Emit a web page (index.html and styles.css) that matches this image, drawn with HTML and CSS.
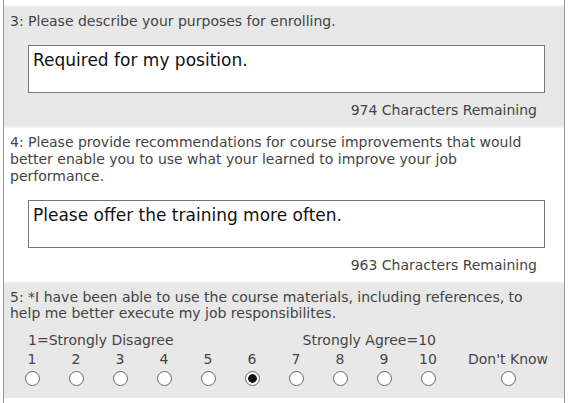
FILE: index.html
```html
<!DOCTYPE html>
<html>
<head>
<meta charset="utf-8">
<link rel="stylesheet" href="styles.css">
</head>
<body>
<div class="survey">
  <div class="top"></div>
  <div class="q gray">
    <div class="qtext">3: Please describe your purposes for enrolling.</div>
    <div class="answer">Required for my position.</div>
    <div class="remain">974 Characters Remaining</div>
  </div>
  <div class="q white">
    <div class="qtext">4: Please provide recommendations for course improvements that would better enable you to use what your learned to improve your job performance.</div>
    <div class="answer">Please offer the training more often.</div>
    <div class="remain">963 Characters Remaining</div>
  </div>
  <div class="q gray last">
    <div class="qtext">5: *I have been able to use the course materials, including references, to help me better execute my job responsibilites.</div>
    <div class="scale">
      <div class="lbl-left">1=Strongly Disagree</div>
      <div class="lbl-right">Strongly Agree=10</div>
      <div class="opt"><span>1</span><i class="radio"></i></div>
      <div class="opt"><span>2</span><i class="radio"></i></div>
      <div class="opt"><span>3</span><i class="radio"></i></div>
      <div class="opt"><span>4</span><i class="radio"></i></div>
      <div class="opt"><span>5</span><i class="radio"></i></div>
      <div class="opt"><span>6</span><i class="radio checked"></i></div>
      <div class="opt"><span>7</span><i class="radio"></i></div>
      <div class="opt"><span>8</span><i class="radio"></i></div>
      <div class="opt"><span>9</span><i class="radio"></i></div>
      <div class="opt"><span>10</span><i class="radio"></i></div>
      <div class="opt dk"><span>Don't Know</span><i class="radio"></i></div>
    </div>
  </div>
</div>
</body>
</html>
```
FILE: styles.css
```css
html, body {
  margin: 0;
  padding: 0;
  background: #fff;
}
body {
  font-family: "DejaVu Sans", Verdana, sans-serif;
  font-size: 14px;
  color: #444;
}
.survey {
  margin-left: 3px;
  width: 560px;
  border-left: 1px solid #999;
  border-right: 1px solid #999;
  height: 403px;
  overflow: hidden;
}
.top {
  height: 5px;
  background: #fff;
}
.q {
  border-top: 2px solid #f3f3f3;
  padding: 6px 0 7px 6px;
}
.gray { background: #e8e8e8; }
.white { background: #fff; }
.qtext {
  line-height: 17px;
  padding-right: 20px;
}
.answer {
  margin: 15px 19px 0 18px;
  height: 46px;
  border: 1px solid #777;
  background: #fff;
  color: #111;
  font-size: 17px;
  line-height: 28px;
  padding: 0 4px;
}
.remain {
  text-align: right;
  padding-right: 27px;
  margin-top: 9px;
  line-height: 17px;
}
.last {
  padding-top: 6px;
  padding-bottom: 12px;
}
.last .qtext {
  line-height: 16px;
}
.scale {
  margin-top: 11px;
  display: grid;
  grid-template-columns: repeat(10, 44px) 116px;
}
.lbl-left {
  grid-row: 1;
  grid-column: 1 / 6;
  padding-left: 18px;
  line-height: 17px;
  white-space: nowrap;
}
.lbl-right {
  grid-row: 1;
  grid-column: 6 / 11;
  text-align: right;
  padding-right: 14px;
  line-height: 17px;
  white-space: nowrap;
}
.opt {
  grid-row: 2;
  display: flex;
  flex-direction: column;
  align-items: center;
  padding-top: 2px;
  white-space: nowrap;
}
.opt span {
  line-height: 17px;
}
.radio {
  margin-top: 3px;
  width: 13px;
  height: 13px;
  border: 1px solid #666;
  border-radius: 50%;
  background: #fff;
  box-sizing: content-box;
}
.radio.checked {
  background: radial-gradient(circle, #111 0, #111 4px, #fff 4.6px);
}
```
